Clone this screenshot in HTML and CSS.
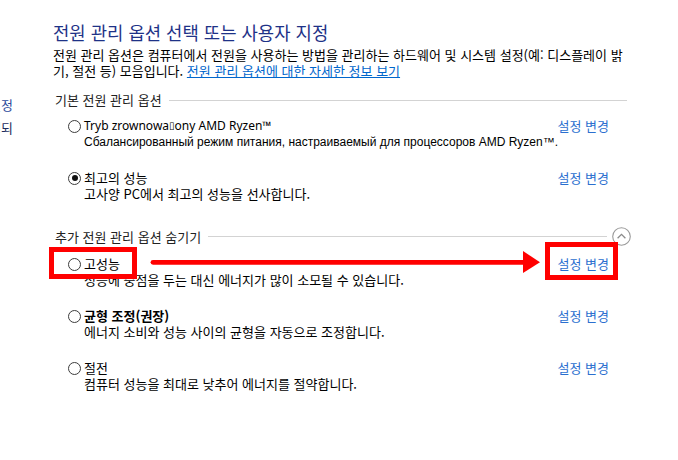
FILE: index.html
```html
<!DOCTYPE html>
<html lang="ko">
<head>
    <meta charset="UTF-8">
    <meta name="viewport" content="width=device-width, initial-scale=1.0">
    <title>전원 관리 옵션</title>
    <link rel="stylesheet" href="styles.css">
</head>
<body>
    <div class="page">
        <nav class="sidebar">
            <a href="#" class="side-link">전원 단추 작동 설정</a>
            <a href="#" class="side-link dark">덮개를 닫을 때 수행되</a>
        </nav>

        <main class="content">
            <h1 class="title">전원 관리 옵션 선택 또는 사용자 지정</h1>
            <p class="intro">전원 관리 옵션은 컴퓨터에서 전원을 사용하는 방법을 관리하는 하드웨어 및 시스템 설정(예: 디스플레이 밝<br>기, 절전 등) 모음입니다. <a href="#" class="more">전원 관리 옵션에 대한 자세한 정보 보기</a></p>

            <section class="group">
                <div class="group-head">
                    <span class="group-title">기본 전원 관리 옵션</span>
                    <span class="rule"></span>
                </div>
                <div class="plan">
                    <div class="plan-main">
                        <div class="plan-name latin"><span class="radio"></span>Tryb zrownowa<span class="tofu">▯</span>ony AMD Ryzen™</div>
                        <div class="plan-desc cyr">Сбалансированный режим питания, настраиваемый для процессоров AMD Ryzen™.</div>
                    </div>
                    <a href="#" class="change">설정 변경</a>
                </div>
                <div class="plan">
                    <div class="plan-main">
                        <div class="plan-name"><span class="radio checked"></span>최고의 성능</div>
                        <div class="plan-desc">고사양 PC에서 최고의 성능을 선사합니다.</div>
                    </div>
                    <a href="#" class="change">설정 변경</a>
                </div>
            </section>

            <section class="group extra">
                <div class="group-head">
                    <span class="group-title">추가 전원 관리 옵션 숨기기</span>
                    <span class="rule"></span>
                    <button class="collapse" aria-label="숨기기">
                        <svg width="19" height="19" viewBox="0 0 19 19">
                            <circle cx="9.5" cy="9.5" r="8.8" fill="#fff" stroke="#9a9a9a" stroke-width="1.1"/>
                            <path d="M5.6 11.2 L9.5 7.3 L13.4 11.2" fill="none" stroke="#8a8a8a" stroke-width="1.3"/>
                        </svg>
                    </button>
                </div>
                <div class="plan">
                    <div class="plan-main">
                        <div class="plan-name"><span class="radio"></span>고성능</div>
                        <div class="plan-desc">성능에 중점을 두는 대신 에너지가 많이 소모될 수 있습니다.</div>
                    </div>
                    <a href="#" class="change">설정 변경</a>
                </div>
                <div class="plan">
                    <div class="plan-main">
                        <div class="plan-name bold"><span class="radio"></span>균형 조정(권장)</div>
                        <div class="plan-desc">에너지 소비와 성능 사이의 균형을 자동으로 조정합니다.</div>
                    </div>
                    <a href="#" class="change">설정 변경</a>
                </div>
                <div class="plan">
                    <div class="plan-main">
                        <div class="plan-name"><span class="radio"></span>절전</div>
                        <div class="plan-desc">컴퓨터 성능을 최대로 낮추어 에너지를 절약합니다.</div>
                    </div>
                    <a href="#" class="change">설정 변경</a>
                </div>
            </section>
        </main>

        <!-- red annotation drawn over the screenshot -->
        <svg class="marks" width="678" height="460" viewBox="0 0 678 460">
            <rect x="51.5" y="249.5" width="83" height="27" fill="none" stroke="#f00" stroke-width="5"/>
            <rect x="547.5" y="244.5" width="68" height="33" fill="none" stroke="#f00" stroke-width="5"/>
            <line x1="153" y1="262.3" x2="525" y2="262.3" stroke="#f00" stroke-width="4.8" stroke-linecap="round"/>
            <polygon points="523,251 540,262.3 523,273" fill="#f00"/>
        </svg>
    </div>
</body>
</html>
```

FILE: styles.css
```css
body {
    margin: 0;
    background: #fff;
    color: #000;
    font-family: "Noto Sans CJK KR", sans-serif;
    font-size: 13px;
    overflow: hidden;
}

.page {
    position: relative;
    width: 678px;
    height: 460px;
    display: flex;
}

.sidebar {
    width: 13px;
    overflow: hidden;
    padding-top: 97px;
    display: flex;
    flex-direction: column;
    gap: 7px;
}

.side-link {
    display: flex;
    justify-content: flex-end;
    white-space: nowrap;
    line-height: 16px;
    color: #2b4a9c;
    text-decoration: none;
}

.side-link.dark {
    color: #1c2c5e;
}

.content {
    width: 574px;
    padding: 21px 0 0 40px;
}

.title {
    margin: 0;
    font-size: 17.8px;
    font-weight: normal;
    line-height: 23px;
    color: #1e3287;
}

.intro {
    margin: 3px 0 0;
    line-height: 16px;
    white-space: nowrap;
}

.more {
    color: #0066cc;
}

.group {
    margin-top: 13px;
}

.group.extra {
    margin-top: 25px;
}

.group-head {
    display: flex;
    align-items: center;
    line-height: 16px;
    padding-left: 2px;
    color: #222;
}

.rule {
    flex: 1;
    height: 1px;
    background: #d3d3d3;
    margin-left: 7px;
}

.extra .rule {
    margin-right: 5px;
}

.collapse {
    padding: 0;
    border: none;
    background: none;
    width: 19px;
    height: 19px;
    margin-right: -4px;
    display: flex;
}

.plan {
    display: grid;
    grid-template-columns: minmax(0, 1fr) auto;
    align-items: start;
    padding: 0 18px 0 15px;
    margin-top: 10px;
    margin-bottom: 20px;
}

.plan + .plan {
    margin-top: 0;
}

.plan-name {
    display: flex;
    align-items: center;
    line-height: 16px;
}

.plan-name.bold {
    font-weight: bold;
}

.latin {
    font-family: "Noto Sans", sans-serif;
    font-size: 12px;
}

.plan-desc {
    padding-left: 16px;
    line-height: 16px;
    white-space: nowrap;
}

.plan-desc.cyr {
    font-family: "Liberation Sans", sans-serif;
    font-size: 12px;
}

.radio {
    position: relative;
    width: 11px;
    height: 11px;
    border: 1px solid #3c3c3c;
    border-radius: 50%;
    margin-right: 3px;
    background: #fff;
}

.radio.checked::after {
    content: "";
    position: absolute;
    top: 2.5px;
    left: 2.5px;
    width: 6px;
    height: 6px;
    border-radius: 50%;
    background: #111;
}

.tofu {
    font-family: "DejaVu Sans", sans-serif;
    font-size: 10px;
}

.change {
    color: #2b6fcf;
    text-decoration: none;
    line-height: 16px;
    white-space: nowrap;
}

.marks {
    position: absolute;
    top: 0;
    left: 0;
    pointer-events: none;
}
```
